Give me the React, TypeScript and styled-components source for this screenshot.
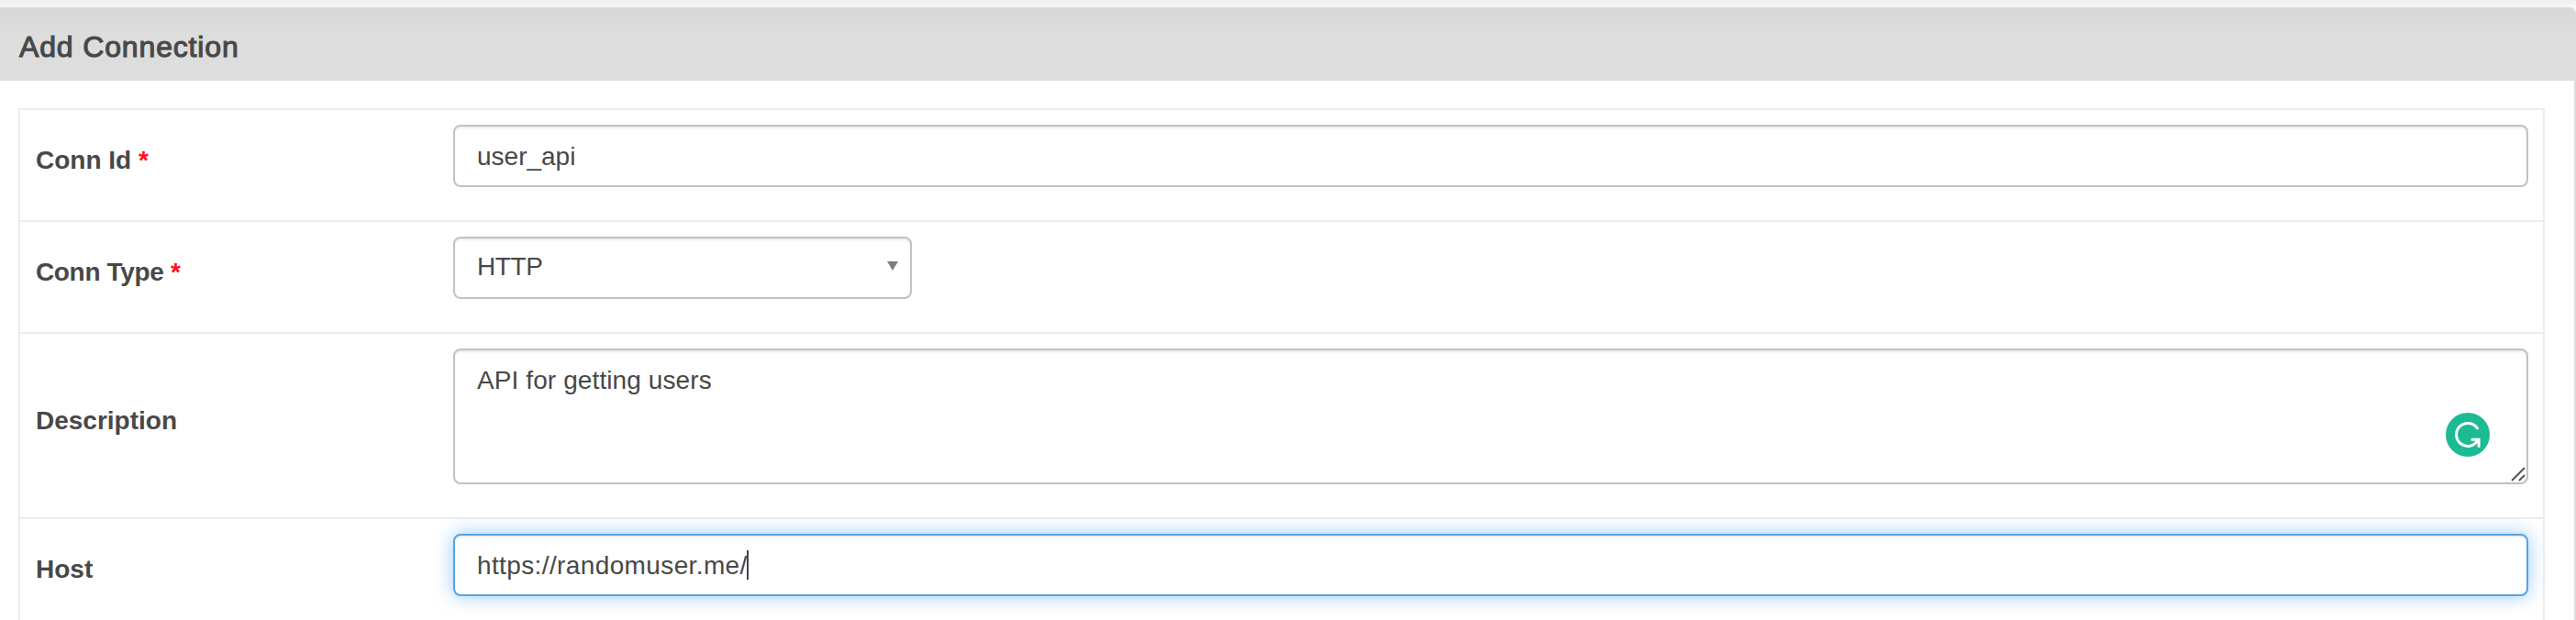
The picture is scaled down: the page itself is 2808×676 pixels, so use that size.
import React from "react";
import styled, { createGlobalStyle, css } from "styled-components";

const GlobalStyle = createGlobalStyle`
  * { box-sizing: border-box; }
  body {
    margin: 0;
    background: #fff;
    color: #484848;
    font-family: "Liberation Sans", Arial, sans-serif;
    overflow: hidden;
  }
`;

const Page = styled.main`
  height: 676px;
  overflow: hidden;
  padding-top: 8px;
  background: linear-gradient(#f0f0f0, #f7f7f7 8px);
`;

const Panel = styled.section`
  height: 690px;
  background: #fff;
  border-right: 2px solid #ddd;
  border-top-right-radius: 8px;
`;

const PanelHeader = styled.header`
  height: 80px;
  margin-right: -2px;
  padding: 0 21px;
  background: linear-gradient(#d8d8d8, #ddd 26px);
  border-top-right-radius: 8px;
`;

const Title = styled.h1`
  margin: 0;
  padding-top: 2px;
  font-size: 32px;
  line-height: 82px;
  font-weight: 400;
  letter-spacing: 0.85px;
  -webkit-text-stroke: 1.1px #484848;
`;

const Form = styled.form`
  margin: 30px 32px 0 20px;
  border: 2px solid #ededed;
  height: 600px;
`;

const Row = styled.div<{ $height: number }>`
  display: flex;
  height: ${(p) => p.$height}px;
  padding: 16px 16px 0 17px;

  & + & {
    border-top: 2px solid #ededed;
  }
`;

const Label = styled.label<{ $offset: number; $spacing?: number }>`
  flex: 0 0 455px;
  padding-top: ${(p) => p.$offset}px;
  font-size: 28px;
  line-height: 40px;
  font-weight: 700;
  letter-spacing: ${(p) => p.$spacing ?? 0}px;
`;

const Required = styled.span`
  color: #ff0f17;
`;

const Control = styled.div<{
  $width?: number;
  $height?: number;
  $focused?: boolean;
  $top?: number;
  $spacing?: number;
}>`
  position: relative;
  display: flex;
  align-items: flex-start;
  flex: ${(p) => (p.$width ? `0 0 ${p.$width}px` : "1")};
  height: ${(p) => p.$height ?? 68}px;
  padding: ${(p) => p.$top ?? 13}px 24px 0;
  border: 2px solid #c2c2c2;
  border-radius: 8px;
  background: #fff;
  box-shadow: inset 0 2px 2px rgba(0, 0, 0, 0.075);
  font-size: 28px;
  line-height: 40px;
  letter-spacing: ${(p) => p.$spacing ?? 0}px;
  white-space: pre;
  ${(p) =>
    p.$focused &&
    css`
      border-color: #58a2e4;
      box-shadow: inset 0 2px 2px rgba(0, 0, 0, 0.075), 0 0 20px rgba(82, 168, 236, 0.6);
    `}
`;

const Caret = styled.span`
  width: 2px;
  height: 32px;
  margin: 3px 0 0 -1px;
  background: #444;
`;

const Arrow = styled.svg`
  width: 12px;
  height: 10px;
  margin: 14px -11px 0 auto;
`;

const Assistant = styled.svg`
  position: absolute;
  right: 40px;
  top: 68px;
  width: 48px;
  height: 48px;
`;

const Grip = styled.svg`
  position: absolute;
  right: 1px;
  bottom: 1px;
  width: 16px;
  height: 16px;
`;

export default function App() {
  return (
    <>
      <GlobalStyle />
      <Page>
        <Panel>
          <PanelHeader>
            <Title>Add Connection</Title>
          </PanelHeader>
          <Form>
            <Row $height={120}>
              <Label $offset={19}>
                Conn Id <Required>*</Required>
              </Label>
              <Control>user_api</Control>
            </Row>
            <Row $height={122}>
              <Label $offset={19} $spacing={-0.35}>
                Conn Type <Required>*</Required>
              </Label>
              <Control $width={500} $top={11} $spacing={-0.4}>
                HTTP
                <Arrow viewBox="0 0 12 10">
                  <path d="M0 0H12L6 10Z" fill="#7c7c7c" />
                </Arrow>
              </Control>
            </Row>
            <Row $height={202}>
              <Label $offset={59}>Description</Label>
              <Control $height={148} $spacing={0.1}>
                API for getting users
                <Assistant viewBox="0 0 48 48">
                  <circle cx="24" cy="24" r="24" fill="#1dba94" />
                  <g fill="none" stroke="#fff" strokeWidth="3" strokeLinecap="round">
                    <path d="M34.5 17A12.5 12.5 0 1 0 35 30" />
                    <path d="M28.8 29.2H36.1V36.6" />
                  </g>
                </Assistant>
                <Grip viewBox="0 0 16 16">
                  <path d="M1 15L15 1M9 15L15 9" fill="none" stroke="#505050" strokeWidth="1.8" />
                </Grip>
              </Control>
            </Row>
            <Row $height={122}>
              <Label $offset={19}>Host</Label>
              <Control $focused $spacing={0.38}>
                https://randomuser.me/
                <Caret />
              </Control>
            </Row>
          </Form>
        </Panel>
      </Page>
    </>
  );
}
